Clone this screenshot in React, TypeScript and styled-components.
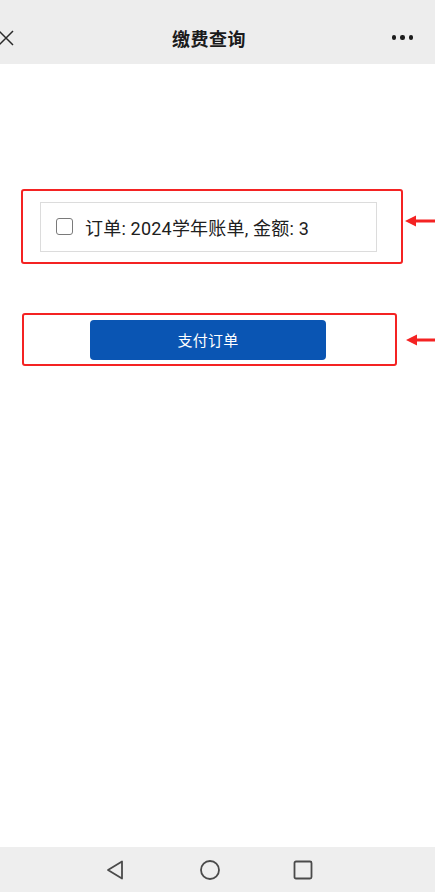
import * as React from 'react'
import styled, { createGlobalStyle } from 'styled-components'

const GlobalStyle = createGlobalStyle`
    html, body {
        margin: 0;
        padding: 0;
        background: #ffffff;
    }
    body {
        font-family: Roboto, 'Noto Sans CJK SC', sans-serif;
        color: #222222;
    }
    * {
        box-sizing: border-box;
    }
`

const Page = styled.div`
    width: 435px;
    height: 892px;
    display: flex;
    flex-direction: column;
    overflow: hidden;
`

const TopBar = styled.div`
    height: 64px;
    flex-shrink: 0;
    background-color: #ededed;
    display: flex;
    align-items: center;
    padding-top: 11px;
    padding-right: 22px;
`

const CloseIcon = styled.svg`
    width: 16px;
    height: 16px;
    margin-left: -2px;
    flex-shrink: 0;
`

const Title = styled.div`
    flex: 1;
    text-align: center;
    padding-left: 12px;
    font-family: 'Noto Sans CJK SC', sans-serif;
    font-size: 18px;
    font-weight: 600;
    color: #1b1b1b;
    letter-spacing: 0.5px;
`

const Dots = styled.div`
    display: flex;
    gap: 4px;
    width: 21px;
`

const Dot = styled.span`
    width: 4.5px;
    height: 4.5px;
    border-radius: 50%;
    background-color: #1c1c1c;
`

const Content = styled.div`
    flex: 1;
    display: flex;
    flex-direction: column;
    padding-top: 125px;
    padding-left: 21px;
`

const Highlight = styled.div<{ $width: number; $height: number; $offset?: number }>`
    position: relative;
    width: ${(p) => p.$width}px;
    height: ${(p) => p.$height}px;
    margin-left: ${(p) => p.$offset || 0}px;
    border: 2px solid #f42323;
    border-radius: 3px;
`

const Arrow = styled.svg<{ $top: number; $gap: number }>`
    position: absolute;
    top: ${(p) => p.$top}px;
    left: calc(100% + ${(p) => p.$gap}px);
    width: 30px;
    height: 12px;
`

const OrderCard = styled(Highlight)`
    padding: 11px 0 0 17px;
`

const OrderRow = styled.label`
    width: 337px;
    height: 50px;
    border: 1px solid #dcdcdc;
    display: flex;
    align-items: center;
    padding-left: 15px;
    gap: 12px;
    font-family: Roboto, 'Noto Sans CJK SC', sans-serif;
    font-size: 18px;
    letter-spacing: 0.2px;
    color: #202020;
`

const Check = styled.span`
    width: 17px;
    height: 17px;
    border: 1.5px solid #7a7a7a;
    border-radius: 3px;
    background: #fff;
    flex-shrink: 0;
    margin-top: -1px;
`

const PayWrap = styled(Highlight)`
    margin-top: 49px;
    display: flex;
    align-items: center;
    padding-left: 66px;
`

const PayButton = styled.button`
    width: 236px;
    height: 40px;
    border: none;
    border-radius: 4px;
    background-color: #0a55b3;
    color: #ffffff;
    font-family: 'Noto Sans CJK SC', sans-serif;
    font-size: 15px;
    letter-spacing: 0.3px;
    cursor: pointer;
`

const NavBar = styled.div`
    height: 45px;
    flex-shrink: 0;
    background-color: #eeeeee;
    display: flex;
    align-items: center;
    padding-left: 106px;
    gap: 73.5px;
`

const NavIcon = styled.svg`
    width: 20px;
    height: 20px;
`

const RedArrow = ({ top, gap }: { top: number; gap: number }) => (
    <Arrow $top={top} $gap={gap} viewBox="0 0 30 12">
        <path d="M9 4.5 H30 V7.5 H9 Z" fill="#f42323" />
        <path d="M0 6 L11 0.5 L11 11.5 Z" fill="#f42323" />
    </Arrow>
)

const App: React.FC = () => (
    <Page>
        <GlobalStyle />
        <TopBar>
            <CloseIcon viewBox="0 0 16 16">
                <path
                    d="M1 1 L15 15 M15 1 L1 15"
                    stroke="#2a2a2a"
                    strokeWidth="1.5"
                    fill="none"
                />
            </CloseIcon>
            <Title>缴费查询</Title>
            <Dots>
                <Dot />
                <Dot />
                <Dot />
            </Dots>
        </TopBar>

        <Content>
            <OrderCard $width={382} $height={75}>
                <OrderRow>
                    <Check />
                    <span>订单: 2024学年账单, 金额: 3</span>
                </OrderRow>
                <RedArrow top={24} gap={4} />
            </OrderCard>

            <PayWrap $width={375} $height={53} $offset={1}>
                <PayButton>支付订单</PayButton>
                <RedArrow top={19} gap={11} />
            </PayWrap>
        </Content>

        <NavBar>
            <NavIcon viewBox="0 0 20 20">
                <path
                    d="M16 1.5 L16 18.5 L2 10 Z"
                    stroke="#4a4a4a"
                    strokeWidth="1.8"
                    strokeLinejoin="round"
                    fill="none"
                />
            </NavIcon>
            <NavIcon viewBox="0 0 20 20">
                <circle cx="10" cy="10" r="9" stroke="#4a4a4a" strokeWidth="1.8" fill="none" />
            </NavIcon>
            <NavIcon viewBox="0 0 20 20">
                <rect
                    x="1.5"
                    y="1.5"
                    width="17"
                    height="17"
                    rx="1.5"
                    stroke="#4a4a4a"
                    strokeWidth="1.8"
                    fill="none"
                />
            </NavIcon>
        </NavBar>
    </Page>
)

export default App
